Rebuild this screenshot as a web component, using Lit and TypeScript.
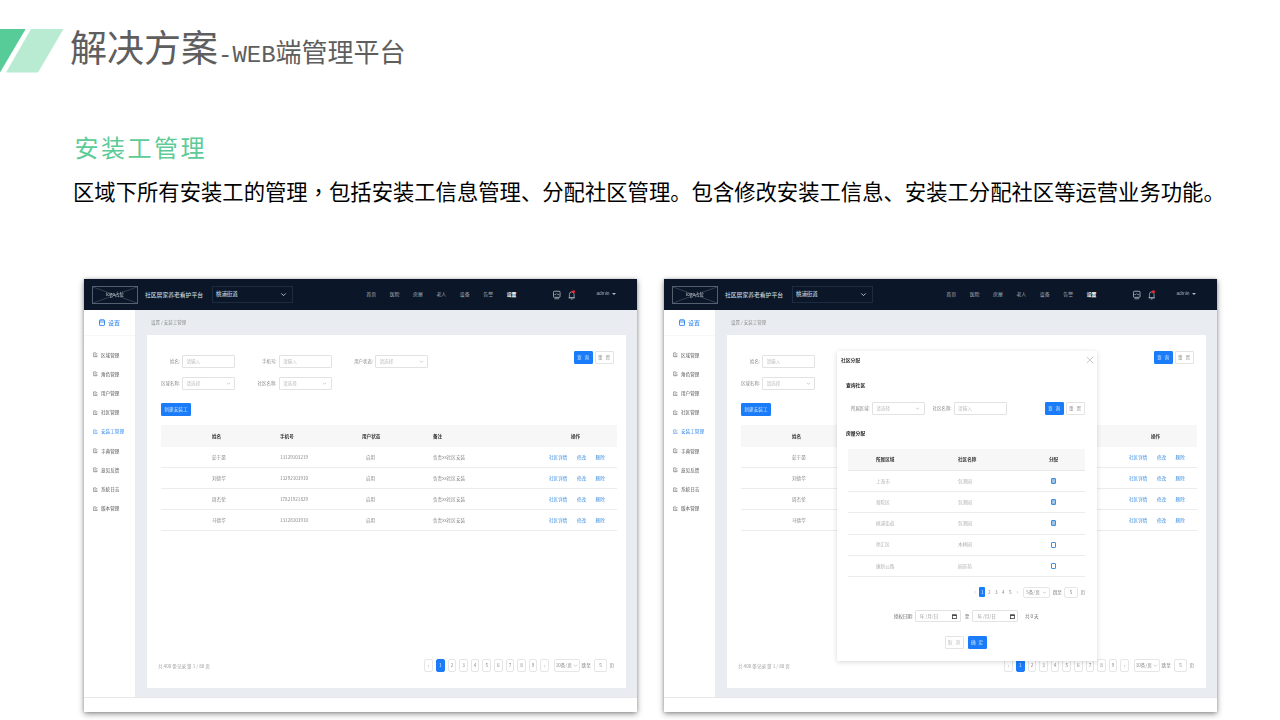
import { LitElement, html, css, svg } from "lit";
import { customElement, property } from "lit/decorators.js";

const chevron = () => html`<svg class="chev" viewBox="0 0 8 8"><path d="M1.5 2.8 4 5.3 6.5 2.8" fill="none" stroke="currentColor" stroke-width=".9"/></svg>`;
const menuIcon = () => html`<svg class="micon" viewBox="0 0 10 10"><path d="M8 5.5V9H1.2V1.2H6" fill="none" stroke="currentColor" stroke-width="1"/><path d="M4 6.5 8.6 1.4" fill="none" stroke="currentColor" stroke-width="1.2"/><path d="M3 3.4h2M3 8h4" stroke="currentColor" stroke-width=".6"/></svg>`;
const calIcon = () => html`<svg viewBox="0 0 6 6"><rect x=".5" y="1" width="5" height="4.6" fill="none" stroke="#222" stroke-width=".8"/><path d="M.5 1.5h5" stroke="#222" stroke-width="1.2"/></svg>`;

const MENU = ["区域管理", "角色管理", "用户管理", "社区管理", "安装工管理", "字典管理", "意见反馈", "系统日志", "版本管理"];
const NAV = ["首页", "医院", "房屋", "老人", "设备", "告警", "设置"];
const ROWS = [
  ["彭于晏", "13129103219"],
  ["刘德华", "13292103910"],
  ["周杰伦", "17821921829"],
  ["马德华", "13128103910"],
];
const MROWS: [string, string, boolean][] = [
  ["上海市", "包测园", true],
  ["普陀区", "包测园", true],
  ["桃浦街道", "包测园", true],
  ["徐汇区", "木椅园", false],
  ["康新公路", "园景苑", false],
];

@customElement("mock-window")
export class MockWindow extends LitElement {
  @property({ type: Boolean }) modal = false;

  static styles = css`
    :host { display: block; }
    * { box-sizing: border-box; }
    .win { position: relative; width: 553px; height: 433px; background: #fff; display: flex; flex-direction: column;
      box-shadow: 0 2px 6px rgba(0,0,0,.42), 0 0 3px rgba(0,0,0,.18); font-family: "Noto Sans CJK SC", "Liberation Sans", sans-serif; font-size: 4.6px; line-height: 1; color: #666; filter: blur(.32px); overflow: visible; }
    .top { height: 31px; flex: none; background: #0b1729; display: flex; align-items: center; padding: 0 21px 0 8px; color: #c2c8cf; }
    .logo { width: 46px; height: 18px; position: relative; border: .6px solid #55606f; display: flex; align-items: center; justify-content: center; color: #d5d9de; font-size: 4.4px; flex: none; }
    .logo svg { position: absolute; inset: 0; width: 100%; height: 100%; }
    .logo span { position: relative; }
    .brand { font-size: 5.8px; margin-left: 7px; color: #dfe3e8; width: 67px; flex: none; white-space: nowrap; }
    .street { width: 81px; height: 17px; border: .6px solid #1d2b40; display: flex; align-items: center; justify-content: space-between; padding: 0 5px 0 3px; font-size: 5.4px; color: #e6e9ed; flex: none; }
    .chev { width: 7px; height: 7px; flex: none; color: #aab; }
    .street .chev { color: #dfe3e8; }
    .nav { display: flex; gap: 13.6px; margin-left: auto; font-size: 4.9px; color: #a9b0b9; }
    .nav .on { color: #fff; font-weight: 700; }
    .ticons { display: flex; align-items: center; margin-left: 37px; gap: 7px; color: #c7ccd2; }
    .ticons svg { width: 7.5px; height: 10px; display: block; }
    .admin { margin-left: 21px; font-family: "Liberation Sans", sans-serif; font-size: 4.8px; color: #a4abb4; display: flex; align-items: center; gap: 2.5px; }
    .admin i { width: 0; height: 0; border: 2px solid transparent; border-top: 2.6px solid #b4bac2; border-bottom: 0; }
    .body { flex: 1; display: flex; min-height: 0; }
    .side { width: 51px; flex: none; background: #fff; }
    .sidehead { height: 25px; display: flex; align-items: center; justify-content: center; gap: 3px; color: #1f7ee8; font-size: 6px; box-shadow: 0 1px 1px rgba(0,0,0,.03); }
    .sidehead svg { width: 6px; height: 7px; }
    .menu { padding: 10.4px 0 0 9px; display: flex; flex-direction: column; }
    .mi { height: 19.2px; display: flex; align-items: center; gap: 3px; color: #555; white-space: nowrap; }
    .mi.on { color: #2f86e8; }
    .micon { width: 5px; height: 5.5px; flex: none; }
    .main { flex: 1; background: #e9edf1; display: flex; flex-direction: column; min-width: 0; }
    .crumb { height: 25px; flex: none; display: flex; align-items: center; padding-left: 16px; color: #8c8c8c; font-size: 4.5px; }
    .card { flex: 1; margin: 0 11px 9px 12px; background: #fff; border-radius: 1px; display: flex; flex-direction: column; padding-top: 20px; }
    .form { display: grid; grid-template-columns: 88px 96.5px 96.5px 1fr; row-gap: 9px; }
    .field { display: flex; justify-content: flex-end; align-items: center; gap: 2px; color: #888; white-space: nowrap; font-size: 4.4px; }
    .ctl { height: 13px; width: 53px; border: .7px solid #e2e2e2; border-radius: 1px; padding: 0 3.5px; display: flex; align-items: center; justify-content: space-between; color: #bdbdbd; flex: none; font-size: 4.6px; }
    .ctl .chev { width: 5px; height: 5px; color: #aaa; }
    .btns { display: flex; gap: 2px; justify-content: flex-end; margin: -4px 12px 0 0; align-items: flex-start; }
    .btn { height: 13px; width: 19px; display: flex; align-items: center; justify-content: center; border-radius: 1px; border: .7px solid #e3e3e3; color: #999; background: #fff; letter-spacing: 1px; white-space: nowrap; flex: none; }
    .btn.pri { background: #1a7cf8; border-color: #1a7cf8; color: #cfe3fd; }
    .new { width: 30px; letter-spacing: 0; margin: 13px 0 9px 14px; }
    .tbl { margin: 0 9px 0 14px; }
    .tr { display: grid; grid-template-columns: 119px 82px 71px 116px 1fr; height: 21px; align-items: center; border-bottom: .8px solid #ececec; color: #888; }
    .tr.hd { height: 22px; background: #f7f7f7; color: #333; font-weight: 700; border: 0; border-radius: 1px 1px 0 0; }
    .tr > :first-child { padding-left: 51px; }
    .st { padding-left: 4px; }
    .tr.hd .st { padding-left: 0; }
    .tr.hd .ops { padding-left: 22px; color: #333; }
    .ops { display: flex; gap: 9.5px; color: #3d8fe0; white-space: nowrap; }
    .pfoot { margin-top: auto; padding: 0 12px 16px 11px; display: flex; align-items: center; justify-content: space-between; color: #a0a0a0; }
    .total { margin-top: 2px; }
    .pager { display: flex; align-items: center; color: #888; }
    .pg { width: 8.6px; height: 13px; margin-right: 3px; border: .7px solid #e6e6e6; border-radius: 2px; display: flex; align-items: center; justify-content: center; flex: none; }
    .pg.on { background: #1a7cf8; border-color: #1a7cf8; color: #e8f1ff; }
    .pg.arr { color: #bbb; font-size: 6px; }
    .psel { width: 26.5px; height: 13px; margin: 0 1.6px 0 1.5px; border: .7px solid #e6e6e6; border-radius: 2px; display: flex; align-items: center; justify-content: center; gap: 1px; white-space: nowrap; flex: none; }
    .psel .chev { width: 5px; height: 5px; }
    .pjump { width: 13.6px; height: 13px; margin: 0 2px 0 3px; border: .7px solid #e6e6e6; border-radius: 2px; display: flex; align-items: center; justify-content: center; flex: none; }
    .foot { height: 15px; flex: none; border-top: .8px solid #e8e8e8; background: #fff; }
    .modal { position: absolute; left: 173px; top: 72px; width: 260px; height: 310px; background: #fff; box-shadow: 0 1px 5px rgba(0,0,0,.16); display: flex; flex-direction: column; border-radius: 1px; }
    .mhead { height: 18px; flex: none; display: flex; align-items: center; justify-content: space-between; padding: 0 3px 0 4px; color: #333; font-weight: 700; font-size: 4.8px; }
    .mhead svg { width: 8px; height: 8px; }
    .h3 { margin-left: 9px; color: #222; font-weight: 700; font-size: 4.8px; height: 10px; display: flex; align-items: center; flex: none; }
    .h3.a { margin-top: 11px; }
    .h3.b { margin-top: 13px; }
    .mform { display: flex; align-items: center; margin-top: 12px; padding: 0 12px 0 14px; }
    .mform .field + .field { margin-left: 8px; }
    .mform .btns { margin: 0 0 0 auto; }
    .mtbl { margin: 11px 12px 0 11px; }
    .mtr { display: grid; grid-template-columns: 110px 91px 1fr; height: 21.2px; align-items: center; border-bottom: .8px solid #ececec; color: #b0b0b0; }
    .mtr.hd { height: 22px; background: #f7f7f7; color: #333; font-weight: 700; border-bottom: .8px solid #e8e8e8; }
    .mtr > :first-child { padding-left: 28px; }
    .chk { width: 5.4px; height: 6px; border: .8px solid #3d8fe0; border-radius: 1px; display: block; margin-left: 2px; }
    .chk.y { background: #8dbbe9; position: relative; }
    .chk svg { position: absolute; inset: 0; width: 100%; height: 100%; }
    .mpager { display: flex; justify-content: flex-end; align-items: center; padding: 9px 12px 0 0; color: #888; height: 22px; flex: none; }
    .mpager .n { width: 7px; display: flex; justify-content: center; align-items: center; flex: none; height: 10px; }
    .mpager .n.on { width: 6px; background: #1a7cf8; color: #e8f1ff; border-radius: 1px; margin: 0 .5px; }
    .mpager .n.arr { color: #bbb; font-size: 6px; }
    .mpager .psel { height: 11px; margin: 0 3px 0 2.5px; justify-content: space-between; padding: 0 2px; }
    .mpager .pjump { height: 11px; width: 13.5px; margin: 0 2.5px 0 2.5px; }
    .mdate { display: flex; align-items: center; margin-top: 11px; color: #666; padding-left: 57px; flex: none; }
    .dl { font-size: 4.4px; margin-right: -1px; }
    .date { width: 46px; height: 12.5px; border: .7px solid #e2e2e2; border-radius: 1px; display: flex; align-items: center; justify-content: space-between; padding: 0 2.5px 0 4px; color: #999; flex: none; margin: 0 4px 0 3px; }
    .date svg { width: 5px; height: 5px; }
    .tot { margin-left: 2.5px; }
    .mact { display: flex; justify-content: center; gap: 4px; margin-top: 13.5px; padding-right: 2px; flex: none; }
    .mact .btn.plain { color: #bbb; }
  `;

  private select(t: string) {
    return html`<div class="ctl"><span>${t}</span>${chevron()}</div>`;
  }

  private input() {
    return html`<div class="ctl"><span>请输入</span></div>`;
  }

  private modalTpl() {
    return html`<div class="modal">
      <div class="mhead"><span>社区分配</span><svg viewBox="0 0 10 10"><path d="M1 1l8 8M9 1 1 9" stroke="#aaa" stroke-width=".8" fill="none"/></svg></div>
      <div class="h3 a">查询社区</div>
      <div class="mform">
        <div class="field">所属区域:${this.select("请选择")}</div>
        <div class="field">社区名称:${this.input()}</div>
        <div class="btns"><div class="btn pri">查 询</div><div class="btn">重 置</div></div>
      </div>
      <div class="h3 b">房屋分配</div>
      <div class="mtbl">
        <div class="mtr hd"><span>所属区域</span><span>社区名称</span><span>分配</span></div>
        ${MROWS.map(([a, b, c]) => html`<div class="mtr"><span>${a}</span><span>${b}</span><span><i class="chk ${c ? "y" : ""}">${c ? html`<svg viewBox="0 0 6 6"><path d="M1.2 3 2.6 4.3 4.8 1.6" stroke="#fff" stroke-width=".8" fill="none"/></svg>` : ""}</i></span></div>`)}
      </div>
      <div class="mpager">
        <span class="n arr">‹</span><span class="n on">1</span><span class="n">2</span><span class="n">3</span><span class="n">4</span><span class="n">5</span><span class="n arr">›</span>
        <span class="psel"><span>5条/页</span>${chevron()}</span><span>跳至</span><span class="pjump">5</span><span>页</span>
      </div>
      <div class="mdate">
        <span class="dl">授权日期:</span>
        <span class="date"><span>年 /月/日</span>${calIcon()}</span>
        <span>至</span>
        <span class="date"><span>年 /月/日</span>${calIcon()}</span>
        <span class="tot">共 0 天</span>
      </div>
      <div class="mact"><div class="btn plain">取 消</div><div class="btn pri">确 定</div></div>
    </div>`;
  }

  render() {
    return html`<div class="win">
      <div class="top">
        <div class="logo"><svg viewBox="0 0 46 18" preserveAspectRatio="none">${svg`<path d="M0 0 46 18M46 0 0 18" stroke="#55606f" stroke-width=".6"/>`}</svg><span>logo占位</span></div>
        <div class="brand">社区居家养老看护平台</div>
        <div class="street"><span>桃浦街道</span>${chevron()}</div>
        <div class="nav">${NAV.map((n, i) => html`<span class=${i === 6 ? "on" : ""}>${n}</span>`)}</div>
        <div class="ticons">
          <svg viewBox="0 0 8 10"><rect x=".5" y="1" width="7" height="6.5" rx="1" fill="none" stroke="currentColor" stroke-width=".8"/><path d="M1.5 4.5h1.5l1-1 1.2 1.2h1.4M1.5 9h5" fill="none" stroke="currentColor" stroke-width=".7"/></svg>
          <svg viewBox="0 0 8 10"><path d="M1.5 8V4.2a2.5 2.5 0 0 1 5 0V8zM.5 8h7M3.2 9.4h1.6" fill="none" stroke="currentColor" stroke-width=".7"/><circle cx="5.9" cy="1.5" r="1.5" fill="#ff1f2d"/></svg>
        </div>
        <div class="admin"><span>admin</span><i></i></div>
      </div>
      <div class="body">
        <div class="side">
          <div class="sidehead"><svg viewBox="0 0 7 8"><rect x=".6" y="1" width="5.8" height="6.4" rx=".6" fill="none" stroke="currentColor" stroke-width="1"/><path d="M.6 3.4h5.8M2.2 .4v1.6M4.8 .4v1.6" stroke="currentColor" stroke-width=".9"/></svg><span>设置</span></div>
          <div class="menu">${MENU.map((m, i) => html`<div class="mi ${i === 4 ? "on" : ""}">${menuIcon()}<span>${m}</span></div>`)}</div>
        </div>
        <div class="main">
          <div class="crumb">设置 / 安装工管理</div>
          <div class="card">
            <div class="form">
              <div class="field">姓名:${this.input()}</div>
              <div class="field">手机号:${this.input()}</div>
              <div class="field">用户状态:${this.select("请选择")}</div>
              <div class="btns"><div class="btn pri">查 询</div><div class="btn">重 置</div></div>
              <div class="field">区域名称:${this.select("请选择")}</div>
              <div class="field">社区名称:${this.select("请选择")}</div>
            </div>
            <div class="btn pri new">新建安装工</div>
            <div class="tbl">
              <div class="tr hd"><span>姓名</span><span>手机号</span><span class="st">用户状态</span><span>备注</span><span class="ops">操作</span></div>
              ${ROWS.map(([n, p]) => html`<div class="tr"><span>${n}</span><span>${p}</span><span class="st">启用</span><span>负责xx社区安装</span><span class="ops"><span>社区详情</span><span>修改</span><span>删除</span></span></div>`)}
            </div>
            <div class="pfoot">
              <span class="total">共 400 条记录 第 1 / 80 页</span>
              <div class="pager">
                <span class="pg arr">‹</span>
                ${[1, 2, 3, 4, 5, 6, 7, 8, 9].map((n) => html`<span class="pg ${n === 1 ? "on" : ""}">${n}</span>`)}
                <span class="pg arr">›</span>
                <span class="psel"><span>10条/页</span>${chevron()}</span>
                <span>跳至</span><span class="pjump">5</span><span>页</span>
              </div>
            </div>
          </div>
        </div>
      </div>
      <div class="foot"></div>
      ${this.modal ? this.modalTpl() : ""}
    </div>`;
  }
}

@customElement("app-root")
export class AppRoot extends LitElement {
  static styles = css`
    :host { display: block; width: 1280px; height: 720px; background: #fff; overflow: hidden; }
    .slide { padding-top: 29px; display: flex; flex-direction: column; }
    .head { display: flex; align-items: center; height: 44px; gap: 6px; color: #5e5e5e; white-space: nowrap; }
    .head svg { width: 64px; height: 44px; flex: none; }
    .ttl { padding-top: 4px; font-family: "Liberation Serif", "Noto Sans CJK SC", serif; line-height: 44px; }
    .t1 { font-size: 37px; }
    .t2 { font-size: 26px; }
    .mono { font-family: "Liberation Mono", monospace; font-size: 24px; }
    .sub { margin: 59px 0 0 74.5px; font-family: "Noto Sans CJK SC", sans-serif; font-size: 24px; line-height: 30px; letter-spacing: 2.5px; color: #5ccb97; }
    .desc { margin: 14px 0 0 73px; font-family: "Noto Sans CJK SC", sans-serif; font-size: 21.33px; line-height: 30px; color: #000; white-space: nowrap; }
    .comma { font-family: "Noto Sans CJK TC", sans-serif; }
    .wins { display: flex; gap: 27px; margin: 73px 0 0 84px; }
  `;

  render() {
    return html`<div class="slide">
      <div class="head">
        <svg viewBox="0 0 64 44"><polygon points="0,0 25.7,0 0,43.5" fill="#57cc99"/><polygon points="31,0 63.5,0 38,43.5 6,43.5" fill="#b9ebd3"/></svg>
        <span class="ttl"><span class="t1">解决方案</span><span class="mono">-WEB</span><span class="t2">端管理平台</span></span>
      </div>
      <div class="sub">安装工管理</div>
      <div class="desc">区域下所有安装工的管理<span class="comma">，</span>包括安装工信息管理、分配社区管理。包含修改安装工信息、安装工分配社区等运营业务功能。</div>
      <div class="wins">
        <mock-window></mock-window>
        <mock-window modal></mock-window>
      </div>
    </div>`;
  }
}
